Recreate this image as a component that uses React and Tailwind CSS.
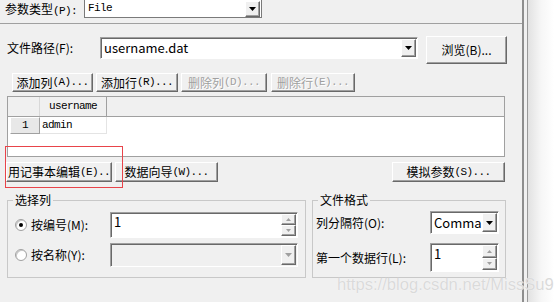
import React from 'react';

const mono = "font-['Liberation_Mono','Noto_Sans_CJK_SC',monospace] text-[11px] tracking-[-0.6px]";
const sans = "font-['Noto_Sans_CJK_SC','Noto_Sans',sans-serif]";
const raised =
  'bg-[#f0f0f0] border border-t-white border-l-white border-r-[#696969] border-b-[#696969] shadow-[inset_-1px_-1px_0_#a0a0a0]';
const sunken =
  'border border-t-[#a0a0a0] border-l-[#a0a0a0] border-r-white border-b-white shadow-[inset_1px_1px_0_#696969]';

// Chinese part at 12px, latin part in the narrow SimSun-like mono
const Zh = ({ zh, en, sansEn }) => (
  <>
    <span className={`text-[12px] ${sans}`}>{zh}</span>
    <span className={sansEn ? `text-[12px] ${sans}` : mono}>{en}</span>
  </>
);

const Btn = ({ zh, en, className = '', disabled, sansEn }) => (
  <div
    className={`flex items-center justify-center leading-none ${raised} ${className} ${
      disabled ? 'text-[#a0a0a0] [text-shadow:1px_1px_0_#fff]' : 'text-black'
    }`}
  >
    <Zh zh={zh} en={en} sansEn={sansEn} />
  </div>
);

const DropBtn = ({ className = '', disabled }) => (
  <div className={`flex items-center justify-center ${raised} ${className}`}>
    <svg width="7" height="4" viewBox="0 0 7 4">
      <path d="M0 0h7L3.5 4z" fill={disabled ? '#a0a0a0' : '#000'} />
    </svg>
  </div>
);

const Spin = () => (
  <div className="w-[15px] my-[1px] mr-[1px] flex flex-col">
    <div className={`flex-1 flex items-center justify-center ${raised}`}>
      <svg width="5" height="3" viewBox="0 0 5 3">
        <path d="M0 3h5L2.5 0z" fill="#a0a0a0" />
      </svg>
    </div>
    <div className={`flex-1 flex items-center justify-center ${raised}`}>
      <svg width="5" height="3" viewBox="0 0 5 3">
        <path d="M0 0h5L2.5 3z" fill="#a0a0a0" />
      </svg>
    </div>
  </div>
);

const Radio = ({ checked }) => (
  <div className="w-[12px] h-[12px] rounded-full border border-[#a0a0a0] bg-white flex items-center justify-center shadow-[inset_1px_1px_0_#c8c8c8]">
    {checked && <div className="w-[4px] h-[4px] rounded-full bg-black" />}
  </div>
);

export default function App() {
  return (
    <div className="relative w-[554px] h-[302px] overflow-hidden bg-[#f0f0f0] flex text-black">
      <div className="w-[522px] flex flex-col">
        {/* 参数类型 */}
        <div className="h-[24px] flex items-start border-b border-[#a0a0a0]">
          <div className="w-[84px] pl-[5px] pt-[1px] leading-[15px]">
            <span className={`text-[12px] ${sans}`}>参数类型</span>
            <span className={mono}>(P):</span>
          </div>
          <div className="w-[178px] h-[18px] bg-white border border-t-0 border-[#7a7a7a] flex items-center">
            <span className={`flex-1 pl-[3px] ${mono}`}>File</span>
            <DropBtn className="w-[15px] h-[16px] mr-[1px]" />
          </div>
        </div>

        {/* 文件路径 */}
        <div className="flex items-start mt-[12px]">
          <div className={`w-[100px] pl-[7px] pt-[4px] text-[12px] leading-[16px] ${sans}`}>文件路径(F):</div>
          <div className={`mt-[1px] w-[318px] h-[22px] bg-white flex items-center ${sunken}`}>
            <span className={`flex-1 pl-[3px] text-[13px] ${sans}`}>username.dat</span>
            <DropBtn className="w-[15px] h-[18px] mr-[1px]" />
          </div>
          <Btn className="ml-[8px] w-[81px] h-[28px]" zh="浏览" en="(B)..." sansEn />
        </div>

        {/* row / column buttons */}
        <div className="flex mt-[9px] pl-[12px] gap-[3px]">
          <Btn className="w-[81px] h-[19px]" zh="添加列" en="(A)..." />
          <Btn className="w-[82px] h-[19px]" zh="添加行" en="(R)..." />
          <Btn className="w-[86px] h-[19px]" zh="删除列" en="(D)..." disabled />
          <Btn className="ml-[1px] w-[84px] h-[19px]" zh="删除行" en="(E)..." disabled />
        </div>

        {/* grid */}
        <div className="ml-[7px] mt-[4px] w-[498px] h-[61px] border border-[#a0a0a0] bg-white flex flex-col">
          <div className="h-[20px] bg-[#f0f0f0] border-b border-[#a0a0a0] flex">
            <div className="w-[32px] border-r border-[#d8d8d8]" />
            <div className={`w-[67px] border-r border-[#a0a0a0] flex items-center justify-center ${mono}`}>
              username
            </div>
          </div>
          <div className="h-[17px] flex">
            <div
              className={`ml-[2px] w-[30px] bg-[#e8e8e8] border border-t-white border-l-white border-r-[#a0a0a0] border-b-[#a0a0a0] flex items-center justify-center ${mono}`}
            >
              1
            </div>
            <div className={`w-[67px] border-r border-b border-[#e4e4e4] flex items-center pl-[2px] ${mono}`}>
              admin
            </div>
          </div>
        </div>

        {/* editor buttons */}
        <div className="flex mt-[5px] pr-[17px]">
          <Btn className="ml-[6px] w-[106px] h-[20px]" zh="用记事本编辑" en="(E).." />
          <Btn className="ml-[3px] w-[103px] h-[20px]" zh="数据向导" en="(W)..." />
          <Btn className="ml-auto w-[113px] h-[20px]" zh="模拟参数" en="(S)..." />
        </div>

        {/* group boxes */}
        <div className="flex mt-[10px]">
          <fieldset className="ml-[7px] w-[299px] h-[86px] border border-[#c8c8c8]">
            <legend className={`ml-[5px] px-[2px] text-[12px] leading-[16px] ${sans}`}>选择列</legend>
            <div className="pl-[7px] pt-[4px] flex flex-col">
              <div className="flex items-center h-[26px]">
                <Radio checked />
                <span className={`ml-[4px] w-[79px] text-[12px] ${sans}`}>按编号(M):</span>
                <div className={`w-[188px] h-[26px] bg-white flex ${sunken}`}>
                  <span className={`flex-1 pl-[3px] text-[13px] leading-[18px] ${sans}`}>1</span>
                  <Spin />
                </div>
              </div>
              <div className="flex items-center h-[24px] mt-[5px]">
                <Radio />
                <span className={`ml-[4px] w-[79px] text-[12px] ${sans}`}>按名称(Y):</span>
                <div className={`w-[188px] h-[24px] bg-[#f0f0f0] flex justify-end ${sunken}`}>
                  <DropBtn disabled className="w-[15px] my-[1px] mr-[1px]" />
                </div>
              </div>
            </div>
          </fieldset>

          <fieldset className="ml-[6px] w-[194px] h-[86px] border border-[#c8c8c8]">
            <legend className={`ml-[5px] px-[2px] text-[12px] leading-[16px] ${sans}`}>文件格式</legend>
            <div className="pl-[3px] pt-[3px] flex flex-col">
              <div className="flex items-center h-[23px]">
                <span className={`w-[114px] text-[12px] ${sans}`}>列分隔符(O):</span>
                <div className={`w-[69px] h-[23px] bg-white flex items-center ${sunken}`}>
                  <span className={`flex-1 pl-[3px] text-[13px] ${sans}`}>Comma</span>
                  <DropBtn className="w-[15px] h-[19px] mr-[1px]" />
                </div>
              </div>
              <div className="flex items-center h-[29px] mt-[9px]">
                <span className={`w-[114px] text-[12px] ${sans}`}>第一个数据行(L):</span>
                <div className={`w-[69px] h-[29px] bg-white flex ${sunken}`}>
                  <span className={`flex-1 pl-[3px] text-[13px] leading-[20px] ${sans}`}>1</span>
                  <Spin />
                </div>
              </div>
            </div>
          </fieldset>
        </div>
      </div>

      {/* window edge */}
      <div className="flex-1 flex">
        <div className="w-[2px] bg-[#8e8e8e]" />
        <div className="w-[3px] bg-[#f0f0f0]" />
        <div className="w-[1px] bg-[#9a9a9a]" />
        <div className="flex-1 bg-gradient-to-r from-[#e2e2e2] via-[#f6f6f6] to-white" />
      </div>

      {/* annotation box */}
      <div className="absolute left-[5px] top-[146px] w-[118px] h-[42px] border border-[#e8444a]" />

      {/* watermark */}
      <div className="absolute left-[337px] top-[273px] text-[16.6px] font-['Liberation_Sans',Arial,sans-serif] text-[#dadada] [text-shadow:0_0_1px_#fff]">
        https://blog.csdn.net/MissSu9
      </div>
    </div>
  );
}
